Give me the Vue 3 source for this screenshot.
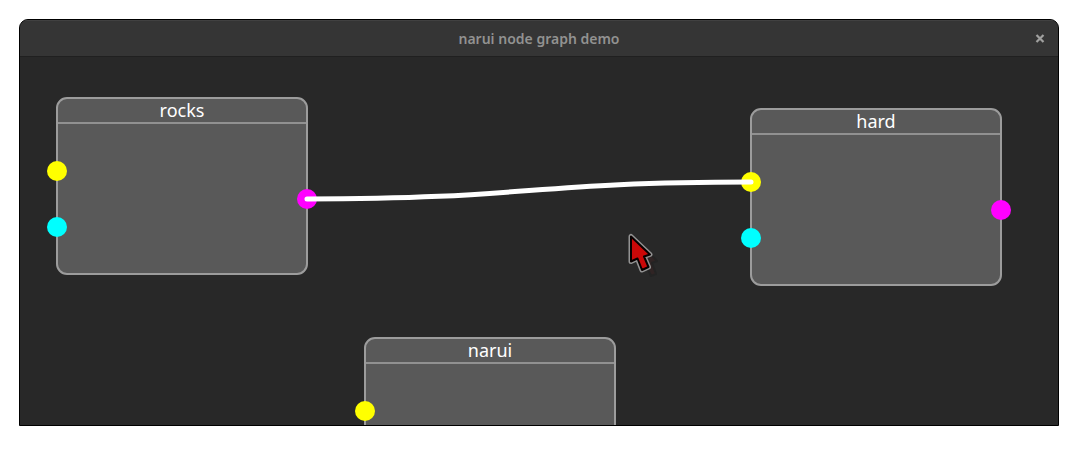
<script setup>
const nodes = [
  { name: 'rocks', x: 36, y: 40 },
  { name: 'hard', x: 730, y: 51 },
  { name: 'narui', x: 344, y: 280 },
]
</script>

<template>
  <div class="desktop">
    <main class="window">
      <header class="titlebar">
        <h1 class="title">narui node graph demo</h1>
        <button class="close" type="button" aria-label="Close">
          <svg width="10" height="10" viewBox="0 0 10 10" aria-hidden="true">
            <path d="M1.5 1L8.5 8M8.5 1L1.5 8" fill="none" stroke="#a0a09f" stroke-width="2.2" />
          </svg>
        </button>
      </header>
      <div class="canvas">
        <section
          v-for="node in nodes"
          :key="node.name"
          class="node"
          :style="{ left: node.x + 'px', top: node.y + 'px' }"
        >
          <h2 class="node-name">{{ node.name }}</h2>
          <span class="port first"></span>
          <span class="port second"></span>
          <span class="port output"></span>
        </section>
        <svg class="overlay" aria-hidden="true">
          <path class="wire" d="M287 142C509 142 509 125 731 125" />
          <path class="ghost" d="M620 186V211L626 208L631 219L636 217L632 206L637 204Z" />
          <path class="pointer-rim" d="M611 179.500V204.500L617.500 201.500L622 213L628.500 210L624 199.500L630 197.500Z" />
          <path class="pointer" d="M611 179.500V204.500L617.500 201.500L622 213L628.500 210L624 199.500L630 197.500Z" />
        </svg>
      </div>
    </main>
  </div>
</template>

<style>
body {
  margin: 0;
  background: #fff;
}
</style>

<style scoped>
.desktop {
  box-sizing: border-box;
  display: flex;
  height: 100vh;
  padding: 19px 22px 28px 19px;
  font-family: "Noto Sans", sans-serif;
}
.window {
  flex: 1;
  display: flex;
  flex-direction: column;
  overflow: hidden;
  border: 1px solid #000;
  border-radius: 9px 9px 0 0;
  background: #282828;
}
.titlebar {
  box-sizing: border-box;
  display: grid;
  grid-template-columns: 36px 1fr 36px;
  align-items: center;
  height: 37px;
  border-top: 1px solid #414141;
  border-bottom: 1px solid #202020;
  background: #353535;
}
.title {
  grid-column: 2;
  margin: 0;
  color: #929291;
  font-size: 14px;
  font-weight: 600;
  line-height: 20px;
  text-align: center;
}
.close {
  display: grid;
  place-items: center;
  width: 36px;
  height: 34px;
  padding: 0;
  border: 0;
  background: none;
}
.canvas {
  position: relative;
  flex: 1;
  overflow: hidden;
}
.node {
  position: absolute;
  box-sizing: border-box;
  width: 252px;
  height: 178px;
  border: 2px solid #9c9c9c;
  border-radius: 11px;
  background: #595959;
}
.node-name {
  margin: 0;
  border-bottom: 2px solid #919191;
  color: #fff;
  font-size: 18px;
  font-weight: 400;
  line-height: 23px;
  text-align: center;
}
.port {
  position: absolute;
  width: 20px;
  height: 20px;
  border-radius: 50%;
}
.first {
  left: -11px;
  top: 62px;
  background: #ff0;
}
.second {
  left: -11px;
  top: 118px;
  background: #0ff;
}
.output {
  right: -11px;
  top: 90px;
  background: #f0f;
}
.overlay {
  position: absolute;
  inset: 0;
  width: 100%;
  height: 100%;
  pointer-events: none;
}
.wire {
  fill: none;
  stroke: #fff;
  stroke-width: 5;
  stroke-linecap: round;
}
.ghost {
  fill: #302424;
  stroke: #232323;
  stroke-width: 2;
  stroke-linejoin: round;
}
.pointer-rim {
  fill: none;
  stroke: #929292;
  stroke-width: 5;
  stroke-linejoin: round;
}
.pointer {
  fill: #cb0808;
  stroke: #080000;
  stroke-width: 2;
  stroke-linejoin: round;
}
</style>
